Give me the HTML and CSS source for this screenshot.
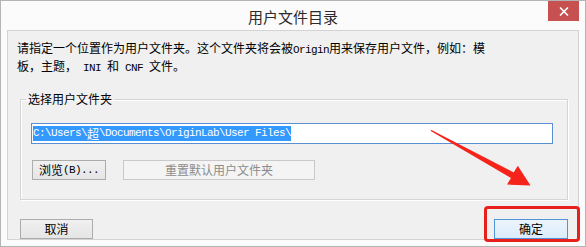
FILE: index.html
```html
<!DOCTYPE html>
<html lang="zh-CN">
<head>
<meta charset="utf-8">
<title>用户文件目录</title>
<link rel="stylesheet" href="styles.css">
</head>
<body>
<div class="window">
  <div class="titlebar">
    <span class="spacer"></span>
    <span class="title">用户文件目录</span>
    <span class="close"><svg width="10" height="9" viewBox="0 0 10 9"><path d="M1 0.5 L9 8.5 M9 0.5 L1 8.5" stroke="#fff" stroke-width="1.6" fill="none"/></svg></span>
  </div>
  <div class="client">
    <p class="desc">请指定一个位置作为用户文件夹。这个文件夹将会被<span class="lat">Origin</span>用来保存用户文件，例如：模<br>板，主题，<span class="lat"> INI </span>和<span class="lat"> CNF </span>文件。</p>
    <fieldset class="group">
      <legend>选择用户文件夹</legend>
      <div class="field"><span class="sel"><span class="lat">C:\Users\</span>超<span class="lat">\Documents\OriginLab\User Files\</span></span></div>
      <div class="row">
        <span class="btn browse">浏览<span class="lat">(B)...</span></span>
        <span class="btn disabled">重置默认用户文件夹</span>
      </div>
    </fieldset>
    <div class="actions">
      <span class="btn">取消</span>
      <span class="btn default">确定</span>
    </div>
  </div>
  <div class="mark"></div>
  <svg class="arrow" width="586" height="247" viewBox="0 0 586 247">
    <polygon points="430.5,129.5 513.7,172.4 517.8,165.8 530.5,185.5 507,184.6 511,177.9 431.2,131.2" fill="#f5231a"/>
  </svg>
</div>
</body>
</html>
```
FILE: styles.css
```css
* { box-sizing: border-box; }
html, body { margin: 0; padding: 0; background: #ffffff; }
body { font-family: "Noto Sans CJK SC", "Noto Sans", sans-serif; font-size: 12px; color: #000; }

.window {
  position: relative;
  width: 586px;
  height: 247px;
  border: 1px solid #b4b4b4;
  background: #fbfbfb;
  display: flex;
  flex-direction: column;
}

.titlebar {
  height: 29px;
  display: grid;
  grid-template-columns: 1fr auto 1fr;
  align-items: center;
}
.title {
  font-size: 15px;
  line-height: 29px;
  color: #2b2b2b;
  padding-top: 1px;
}
.close {
  justify-self: end;
  align-self: start;
  width: 31px;
  height: 20px;
  margin-right: 6px;
  background: #c75050;
  display: flex;
  align-items: center;
  justify-content: center;
}

.client {
  margin: 0 6px;
  height: 210px;
  border: 1px solid #d3d3d3;
  background: #f0f0f0;
  display: flex;
  flex-direction: column;
}

.lat {
  font-family: "Liberation Mono", monospace;
  font-size: 11px;
  letter-spacing: -0.6px;
  white-space: pre;
}

.desc {
  margin: 0;
  padding: 9px 4px 0 9px;
  line-height: 15px;
  color: #000;
}

.group {
  margin: 17px 10px 0 12px;
  padding: 0;
  height: 107px;
  border: 1px solid #d5d5d5;
  box-shadow: inset 1px 1px 0 #ffffff, 1px 1px 0 #ffffff;
  min-width: 0;
}
.group legend {
  margin-left: 5px;
  padding: 0 2px;
  line-height: 12px;
  color: #000;
}

.field {
  margin: 18px 0 0 10px;
  width: 522px;
  height: 21px;
  border: 1px solid #5b8fd3;
  background: #ffffff;
  display: flex;
  align-items: center;
  padding-left: 1px;
}
.sel {
  background: #3399ff;
  color: #ffffff;
  height: 15px;
  line-height: 15px;
  display: inline-flex;
  align-items: center;
}

.row {
  margin: 16px 0 0 11px;
  display: flex;
  gap: 17px;
}

.btn {
  height: 20px;
  width: 73px;
  border: 1px solid #acacac;
  background: linear-gradient(#f0f0f0, #e5e5e5);
  display: flex;
  align-items: center;
  justify-content: center;
  line-height: 18px;
  color: #000;
}
.btn.browse { width: 74px; }
.btn.disabled {
  width: 192px;
  border-color: #c9c9c9;
  background: #f4f4f4;
  color: #8c8c8c;
}
.btn.default {
  width: 74px;
  border-color: #4f93d8;
  background: linear-gradient(#ecf4fc, #dcecfc);
}

.actions {
  margin-top: 19px;
  padding: 0 10px 0 12px;
  display: flex;
  justify-content: space-between;
}

.mark {
  position: absolute;
  left: 483px;
  top: 205px;
  width: 96px;
  height: 36px;
  border: 3px solid #e8201c;
  border-radius: 4px;
}
.arrow {
  position: absolute;
  left: -1px;
  top: -1px;
  pointer-events: none;
}
```
